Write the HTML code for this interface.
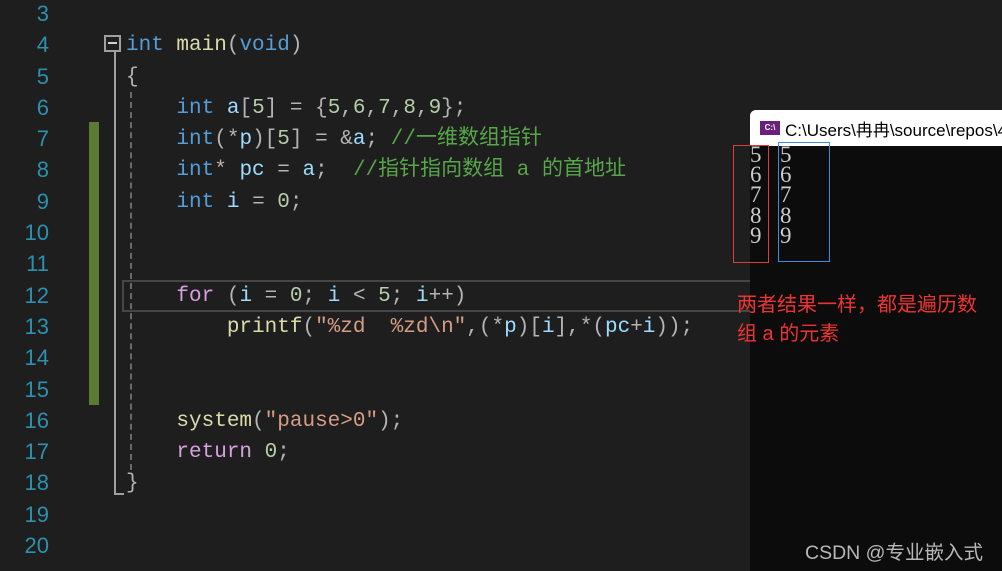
<!DOCTYPE html>
<html><head><meta charset="utf-8"><style>
body{margin:0;width:1002px;height:571px;background:#1e1e1e;overflow:hidden;position:relative;font-family:"Liberation Mono","Noto Sans CJK SC",monospace;}
.ln{position:absolute;left:0;width:49px;text-align:right;color:#2b91af;font-size:22px;line-height:31.3px;font-family:"Liberation Sans",sans-serif}
.code{position:absolute;left:126px;top:-1px;font-size:21px;line-height:31.3px;white-space:pre;color:#dcdcdc}
.k{color:#569cd6}.f{color:#dcdcaa}.v{color:#9cdcfe}.n{color:#b5cea8}.c{color:#57a64a}.s{color:#d69d85}.p{color:#d8a0df}.o{color:#b4b4b4}
</style></head><body>
<div class="ln" style="top:-2px">3<br>4<br>5<br>6<br>7<br>8<br>9<br>10<br>11<br>12<br>13<br>14<br>15<br>16<br>17<br>18<br>19<br>20</div>
<div style="position:absolute;left:89px;top:122px;width:10px;height:283px;background:#5b7a34"></div>
<div style="position:absolute;left:104px;top:35px;width:13px;height:13px;border:2px solid #a0a0a0"></div>
<div style="position:absolute;left:108px;top:42px;width:9px;height:2px;background:#d0d0d0"></div>
<div style="position:absolute;left:114px;top:52px;width:2px;height:443px;background:#a0a0a0"></div>
<div style="position:absolute;left:114px;top:493px;width:10px;height:2px;background:#a0a0a0"></div>
<div style="position:absolute;left:130px;top:92px;width:0;height:378px;border-left:2px dashed #6a6a6a"></div>
<div style="position:absolute;left:122px;top:280px;width:640px;height:28px;border:2px solid #464646"></div>
<div class="code"><span class="k"> </span>
<span class="k">int</span> <span class="f">main</span><span class="o">(</span><span class="k">void</span><span class="o">)</span>
<span class="o">{</span>
    <span class="k">int</span> <span class="v">a</span><span class="o">[</span><span class="n">5</span><span class="o">] = {</span><span class="n">5</span><span class="o">,</span><span class="n">6</span><span class="o">,</span><span class="n">7</span><span class="o">,</span><span class="n">8</span><span class="o">,</span><span class="n">9</span><span class="o">};</span>
    <span class="k">int</span><span class="o">(*</span><span class="v">p</span><span class="o">)[</span><span class="n">5</span><span class="o">] = &amp;</span><span class="v">a</span><span class="o">;</span> <span class="c">//一维数组指针</span>
    <span class="k">int</span><span class="o">*</span> <span class="v">pc</span> <span class="o">=</span> <span class="v">a</span><span class="o">;</span>  <span class="c">//指针指向数组 a 的首地址</span>
    <span class="k">int</span> <span class="v">i</span> <span class="o">=</span> <span class="n">0</span><span class="o">;</span>


    <span class="p">for</span> <span class="o">(</span><span class="v">i</span> <span class="o">=</span> <span class="n">0</span><span class="o">;</span> <span class="v">i</span> <span class="o">&lt;</span> <span class="n">5</span><span class="o">;</span> <span class="v">i</span><span class="o">++)</span>
        <span class="f">printf</span><span class="o">(</span><span class="s">"%zd  %zd\n"</span><span class="o">,(*</span><span class="v">p</span><span class="o">)[</span><span class="v">i</span><span class="o">],*(</span><span class="v">pc</span><span class="o">+</span><span class="v">i</span><span class="o">));</span>


    <span class="f">system</span><span class="o">(</span><span class="s">"pause&gt;0"</span><span class="o">);</span>
    <span class="p">return</span> <span class="n">0</span><span class="o">;</span>
<span class="o">}</span></div>
<div style="position:absolute;left:750px;top:110px;width:252px;height:36px;background:#fff;border-top-left-radius:6px"></div>
<div style="position:absolute;left:760px;top:121px;width:20px;height:14px;background:#68217a;color:#fff;font:bold 8px 'Liberation Sans',sans-serif;line-height:14px;text-align:center">C:\</div>
<div style="position:absolute;left:785px;top:116px;font:17px 'Liberation Sans','Noto Sans CJK SC',sans-serif;color:#000;white-space:nowrap">C:\Users\冉冉\source\repos\45</div>
<div style="position:absolute;left:750px;top:146px;width:252px;height:425px;background:#0c0c0c"></div>
<div style="position:absolute;left:750px;top:145px;font:23px 'Liberation Serif',serif;line-height:20.2px;color:#cccccc">5<br>6<br>7<br>8<br>9</div>
<div style="position:absolute;left:780px;top:145px;font:23px 'Liberation Serif',serif;line-height:20.2px;color:#cccccc">5<br>6<br>7<br>8<br>9</div>
<div style="position:absolute;left:733px;top:145px;width:34px;height:116px;border:1px solid #e03a3a"></div>
<div style="position:absolute;left:778px;top:142px;width:50px;height:118px;border:1px solid #3a8ee0"></div>
<div style="position:absolute;left:737px;top:291px;width:245px;font:20px 'Liberation Sans','Noto Sans CJK SC',sans-serif;line-height:29px;color:#ee3333">两者结果一样，都是遍历数组 a 的元素</div>
<div style="position:absolute;left:805px;top:536px;font:19.5px 'Liberation Sans','Noto Sans CJK SC',sans-serif;color:#b8b8b8;white-space:nowrap">CSDN @专业嵌入式</div>
</body></html>
